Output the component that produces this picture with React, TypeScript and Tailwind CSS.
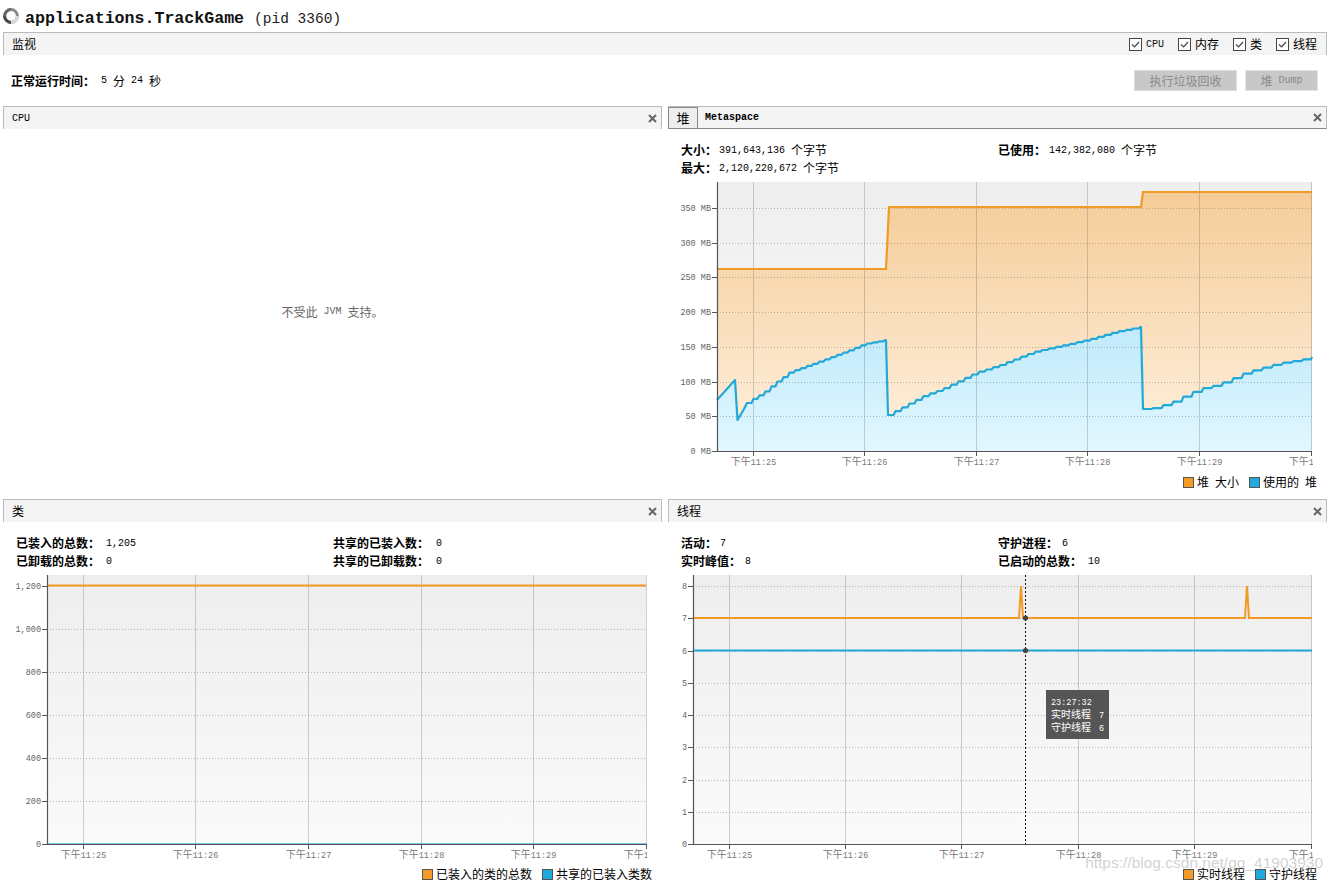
const mono = 'font-["Liberation_Mono","Noto_Sans_CJK_SC",monospace]'
const svgFont = '"Liberation Mono","Noto Sans CJK SC",monospace'

const CloseIcon = () => (
    <svg width="9" height="9" viewBox="0 0 9 9" className="shrink-0">
        <path d="M1 1 L8 8 M8 1 L1 8" stroke="#666" strokeWidth="2" fill="none" />
    </svg>
)

const Spinner = () => (
    <svg width="16" height="16" viewBox="0 0 16 16" className="shrink-0">
        <circle cx="8" cy="8" r="6.4" stroke="#8a8a8a" strokeWidth="3" fill="none" />
        <path d="M1.6 8 A6.4 6.4 0 0 0 8 14.4" stroke="#4a4a4a" strokeWidth="3" fill="none" />
        <path d="M8 14.4 A6.4 6.4 0 0 0 14.4 8" stroke="#d8d8d8" strokeWidth="3" fill="none" />
        <path d="M1.6 8 A6.4 6.4 0 0 1 8 1.6" stroke="#6a6a6a" strokeWidth="3" fill="none" />
    </svg>
)

const Check = ({ label, isMono }: { label: string; isMono?: boolean }) => (
    <div className="flex items-center gap-1">
        <div className="w-[13px] h-[13px] border border-[#444] bg-white flex items-center justify-center">
            <svg width="11" height="11" viewBox="0 0 11 11">
                <path d="M2 5.5 L4.6 8 L9 3" stroke="#444" strokeWidth="1.2" fill="none" />
            </svg>
        </div>
        <span className={isMono ? `${mono} text-[10px] text-[#111]` : 'text-xs text-black'}>{label}</span>
    </div>
)

const Header = ({ title, isMono, closable = true }: { title: string; isMono?: boolean; closable?: boolean }) => (
    <div className="h-[23px] bg-[#f4f4f4] border-t border-l border-r border-[#bbbbbb] flex items-center justify-between pl-2 pr-[4px]">
        <span className={isMono ? `${mono} text-[10px] text-black` : 'text-xs text-black'}>{title}</span>
        {closable && <CloseIcon />}
    </div>
)

const TabHeader = () => (
    <div className="h-[23px] bg-[#f4f4f4] border-t border-r border-b border-t-[#bbbbbb] border-r-[#bbbbbb] border-b-[#888888] flex items-center justify-between pr-[4px]">
        <div className="flex items-center h-full">
            <div className="h-full w-[30px] bg-[#eeeeee] border-l border-r border-t border-[#888888] flex items-center justify-center text-[13px] text-black">堆</div>
            <span className={`${mono} text-[10px] font-bold text-black ml-[7px]`}>Metaspace</span>
        </div>
        <CloseIcon />
    </div>
)

type Row = { label: string; value: string; unit?: string; gap: string }

const Stat = ({ label, value, unit, gap }: Row) => (
    <div className="h-[18px] flex items-center">
        <span className="text-xs font-bold text-black">{label}</span>
        <span className={`${mono} text-[10px] text-black ${gap}`}>{value}</span>
        {unit && <span className="text-xs text-black ml-[6px]">{unit}</span>}
    </div>
)

const Stats = ({ rows }: { rows: Row[] }) => (
    <div className="px-[13px] pt-3 grid grid-cols-[317px_1fr]">
        {rows.map((r) => (
            <Stat key={r.label} {...r} />
        ))}
    </div>
)

const Legend = ({ a, b }: { a: string; b: string }) => (
    <div className="flex justify-end items-center gap-[10px] pr-[10px] h-4">
        <div className="flex items-center gap-[3px]">
            <div className="w-[11px] h-[11px] bg-[#f39c25] border border-[#555]" />
            <span className="text-xs text-black">{a}</span>
        </div>
        <div className="flex items-center gap-[3px]">
            <div className="w-[11px] h-[11px] bg-[#1faadb] border border-[#555]" />
            <span className="text-xs text-black">{b}</span>
        </div>
    </div>
)

type Pt = [number, number]

// sample the curve at a fixed x step, flat then a short ramp, like the chart's polling
const stairs = (pts: Pt[], step: number): Pt[] => {
    const out: Pt[] = [pts[0]]
    const end = pts[pts.length - 1][0]
    let lastY = pts[0][1]
    let seg = 0
    for (let x = pts[0][0] + step; x < end; x += step) {
        while (pts[seg + 1][0] < x) seg++
        const [x0, y0] = pts[seg]
        const [x1, y1] = pts[seg + 1]
        const y = y0 + ((x - x0) / (x1 - x0)) * (y1 - y0)
        out.push([x - 1.5, lastY], [x + 0.5, y])
        lastY = y
    }
    out.push([end - 1, lastY], pts[pts.length - 1])
    return out
}

const toPath = (pts: Pt[]) => pts.map((p, i) => `${i ? 'L' : 'M'}${p[0].toFixed(1)} ${p[1].toFixed(1)}`).join(' ')

const heapUsed: Pt[] = [
    [717, 400],
    [735, 380],
    [737.5, 420],
    [744, 409],
    ...stairs([[747, 403], [751, 400], [763, 393], [775, 383], [790, 372], [818, 362], [850, 350], [864, 344], [886, 340]], 6),
    ...stairs([[888, 415], [910, 403], [925, 395], [940, 390], [975, 373], [1000, 365], [1033, 352], [1087, 340], [1115, 332], [1141, 327]], 7),
    ...stairs([[1143, 409], [1150, 409], [1170, 403], [1199, 389], [1217, 385], [1247, 372], [1280, 363], [1300, 360], [1312, 357]], 10),
]
const heapSize: Pt[] = [[717, 269], [886, 269], [889, 207], [1141, 207], [1143, 192], [1312, 192]]

const timeLabels = ['11:25', '11:26', '11:27', '11:28', '11:29', '11:30']

const Axes = ({
    id, left, right, top, bottom, xs, ys, clipLeft, children, overlay,
}: {
    id: string
    left: number
    right: number
    top: number
    bottom: number
    xs: number[]
    ys: { y: number; label: string }[]
    clipLeft: number
    children?: React.ReactNode
    overlay?: React.ReactNode
}) => (
    <>
        <defs>
            <linearGradient id={`${id}-bg`} x1="0" y1="0" x2="0" y2="1">
                <stop offset="0" stopColor="#eeeeee" />
                <stop offset="1" stopColor="#fafafa" />
            </linearGradient>
            <clipPath id={`${id}-clip`}>
                <rect x={clipLeft} y={top} width={right - clipLeft + 1} height={300} />
            </clipPath>
        </defs>
        <rect x={left} y={top} width={right - left} height={bottom - top} fill={`url(#${id}-bg)`} />
        {children}
        {xs.map((x) => (
            <line key={x} x1={x + 0.5} x2={x + 0.5} y1={top} y2={bottom} stroke="#777" strokeOpacity="0.35" />
        ))}
        {ys.map((t) => (
            <g key={t.label}>
                <line x1={left} x2={right} y1={t.y + 0.5} y2={t.y + 0.5} stroke="#888" strokeOpacity="0.6" strokeDasharray="1 2" />
                <line x1={left - 5} x2={left} y1={t.y + 0.5} y2={t.y + 0.5} stroke="#555" />
                <text x={left - 6} y={t.y + 2.5} textAnchor="end" fontSize="8.5" fontFamily={svgFont} fill="#666">{t.label}</text>
            </g>
        ))}
        {overlay}
        <path d={`M${left + 0.5} ${top} V${bottom + 0.5} H${right}`} stroke="#555" strokeWidth="1.2" fill="none" />
        <g clipPath={`url(#${id}-clip)`}>
            {xs.map((x, i) => (
                <g key={x}>
                    <line x1={x + 0.5} x2={x + 0.5} y1={bottom} y2={bottom + 5} stroke="#555" />
                    <text x={x + 0.5} y={bottom + 14} textAnchor="middle" fontSize="8.5" fontFamily={svgFont} fill="#777">
                        <tspan fontSize="10">下午</tspan>
                        {timeLabels[i]}
                    </text>
                </g>
            ))}
        </g>
    </>
)

const HeapChart = () => (
    <svg width="659" height="288" viewBox="668 182 659 288" className="block">
        <defs>
            <linearGradient id="heap-size" gradientUnits="userSpaceOnUse" x1="0" y1="192" x2="0" y2="451">
                <stop offset="0" stopColor="#f5cc98" />
                <stop offset="1" stopColor="#fff1e0" />
            </linearGradient>
            <linearGradient id="heap-used" gradientUnits="userSpaceOnUse" x1="0" y1="327" x2="0" y2="451">
                <stop offset="0" stopColor="#bfeafb" />
                <stop offset="1" stopColor="#e2f7ff" />
            </linearGradient>
        </defs>
        <Axes
            id="heap"
            left={717}
            right={1312}
            top={182}
            bottom={451}
            clipLeft={668}
            xs={[753, 864, 976, 1087, 1199, 1311]}
            ys={[0, 50, 100, 150, 200, 250, 300, 350].map((v) => ({ y: Math.round(451 - v * 0.6943), label: `${v} MB` }))}
            overlay={
                <>
                    <path d={toPath(heapSize)} stroke="#f29a26" strokeWidth="2.2" fill="none" />
                    <path d={toPath(heapUsed)} stroke="#22a9d8" strokeWidth="2.2" fill="none" strokeLinejoin="round" />
                </>
            }
        >
            <path d={`${toPath(heapSize)} L1312 451 L717 451 Z`} fill="url(#heap-size)" />
            <path d={`${toPath(heapUsed)} L1312 451 L717 451 Z`} fill="url(#heap-used)" />
        </Axes>
    </svg>
)

const ClassChart = () => (
    <svg width="659" height="288" viewBox="3 575 659 288" className="block">
        <Axes
            id="cls"
            left={47}
            right={646}
            top={575}
            bottom={844}
            clipLeft={3}
            xs={[83, 195, 308, 421, 533, 646]}
            ys={[0, 200, 400, 600, 800, 1000, 1200].map((v) => ({ y: Math.round(844 - v * 0.215), label: v.toLocaleString('en-US') }))}
            overlay={
                <>
                    <line x1="47" x2="646" y1="585.5" y2="585.5" stroke="#f29a26" strokeWidth="2" />
                    <line x1="47" x2="646" y1="843.5" y2="843.5" stroke="#22a9d8" strokeOpacity="0.6" />
                </>
            }
        />
    </svg>
)

const ThreadChart = () => (
    <svg width="659" height="288" viewBox="668 575 659 288" className="block">
        <Axes
            id="thr"
            left={693}
            right={1312}
            top={575}
            bottom={844}
            clipLeft={668}
            xs={[729, 845, 961, 1078, 1194, 1311]}
            ys={[0, 1, 2, 3, 4, 5, 6, 7, 8].map((v) => ({ y: Math.round(844 - v * 32.25), label: `${v}` }))}
            overlay={
                <>
                    <path d="M693 618 H1019 L1021 586 L1023 618 H1245 L1247 586 L1249 618 H1312" stroke="#f29a26" strokeWidth="2" fill="none" />
                    <line x1="693" x2="1312" y1="650.5" y2="650.5" stroke="#22a9d8" strokeWidth="2" />
                    <line x1="1025.5" x2="1025.5" y1="575" y2="844" stroke="#111" strokeDasharray="2 2" />
                    <circle cx="1025.5" cy="618" r="2.6" fill="#444" />
                    <circle cx="1025.5" cy="650.5" r="2.6" fill="#444" />
                    <rect x="1046" y="690" width="63" height="49" fill="#555" />
                    <g fontSize="10" fontFamily={svgFont} fill="#fff">
                        <text x="1051" y="705" fontSize="8.5">23:27:32</text>
                        <text x="1051" y="718">实时线程</text>
                        <text x="1099" y="718" fontSize="8.5">7</text>
                        <text x="1051" y="731">守护线程</text>
                        <text x="1099" y="731" fontSize="8.5">6</text>
                    </g>
                </>
            }
        />
    </svg>
)

const App = () => {
    return (
        <div className="relative w-[1332px] h-[882px] overflow-hidden bg-white pl-[3px] pr-[5px] font-['Noto_Sans_CJK_SC',sans-serif]">
            <div className="h-8 flex items-center">
                <Spinner />
                <span className={`${mono} ml-[6px] mt-[7px] text-[16.6px] font-bold text-[#111]`}>applications.TrackGame</span>
                <span className={`${mono} ml-[10px] mt-[7px] text-[14.5px] text-[#222]`}>(pid 3360)</span>
            </div>

            <div className="h-[23px] bg-[#f4f4f4] border-t border-l border-r border-[#bbbbbb] flex items-center justify-between pl-2 pr-[9px]">
                <span className="text-xs text-black">监视</span>
                <div className="flex items-center gap-[14px]">
                    <Check label="CPU" isMono />
                    <Check label="内存" />
                    <Check label="类" />
                    <Check label="线程" />
                </div>
            </div>

            <div className="h-[51px] flex items-center justify-between pl-2 pr-[9px]">
                <div className="flex items-center">
                    <span className="text-xs font-bold text-black">正常运行时间：</span>
                    <span className={`${mono} text-[10px] text-black ml-[6px]`}>5</span>
                    <span className="text-xs text-black mx-[6px]">分</span>
                    <span className={`${mono} text-[10px] text-black`}>24</span>
                    <span className="text-xs text-black ml-[6px]">秒</span>
                </div>
                <div className="flex items-center gap-2">
                    <button className="w-[103px] h-[21px] bg-[#c8c8c8] border border-[#dddddd] text-xs text-[#8a8a8a] flex items-center justify-center">执行垃圾回收</button>
                    <button className="w-[73px] h-[21px] bg-[#c8c8c8] border border-[#e4e4e4] text-[#8a8a8a] flex items-center justify-center gap-[6px]">
                        <span className="text-xs">堆</span>
                        <span className={`${mono} text-[10px]`}>Dump</span>
                    </button>
                </div>
            </div>

            <div className="grid grid-cols-[659px_659px] gap-x-[6px]">
                <div className="h-[393px] flex flex-col">
                    <Header title="CPU" isMono />
                    <div className="flex-1 flex items-center justify-center text-xs text-[#666] gap-[6px] pb-[4px]">
                        <span>不受此</span>
                        <span className={`${mono} text-[10px]`}>JVM</span>
                        <span>支持。</span>
                    </div>
                </div>
                <div className="h-[393px] flex flex-col">
                    <TabHeader />
                    <Stats
                        rows={[
                            { label: '大小：', value: '391,643,136', unit: '个字节', gap: 'ml-[2px]' },
                            { label: '已使用：', value: '142,382,080', unit: '个字节', gap: 'ml-[3px]' },
                            { label: '最大：', value: '2,120,220,672', unit: '个字节', gap: 'ml-[2px]' },
                        ]}
                    />
                    <div className="mt-[5px]">
                        <HeapChart />
                    </div>
                    <div className="mt-1">
                        <Legend a={'堆\u2002大小'} b={'使用的\u2002堆'} />
                    </div>
                </div>
                <div className="h-[383px] flex flex-col">
                    <Header title="类" />
                    <Stats
                        rows={[
                            { label: '已装入的总数：', value: '1,205', gap: 'ml-[6px]' },
                            { label: '共享的已装入数：', value: '0', gap: 'ml-[7px]' },
                            { label: '已卸载的总数：', value: '0', gap: 'ml-[6px]' },
                            { label: '共享的已卸载数：', value: '0', gap: 'ml-[7px]' },
                        ]}
                    />
                    <div className="mt-[5px]">
                        <ClassChart />
                    </div>
                    <div className="mt-[3px]">
                        <Legend a="已装入的类的总数" b="共享的已装入类数" />
                    </div>
                </div>
                <div className="h-[383px] flex flex-col">
                    <Header title="线程" />
                    <Stats
                        rows={[
                            { label: '活动：', value: '7', gap: 'ml-[3px]' },
                            { label: '守护进程：', value: '6', gap: 'ml-[4px]' },
                            { label: '实时峰值：', value: '8', gap: 'ml-[4px]' },
                            { label: '已启动的总数：', value: '10', gap: 'ml-[6px]' },
                        ]}
                    />
                    <div className="mt-[5px]">
                        <ThreadChart />
                    </div>
                    <div className="mt-[3px]">
                        <Legend a="实时线程" b="守护线程" />
                    </div>
                </div>
            </div>

            <div className="absolute right-[9px] bottom-[9px] font-['Liberation_Sans',sans-serif] text-[15.5px] leading-5 text-[#b4b4b4]/60">
                https://blog.csdn.net/qq_41903930
            </div>
        </div>
    )
}

export default App
